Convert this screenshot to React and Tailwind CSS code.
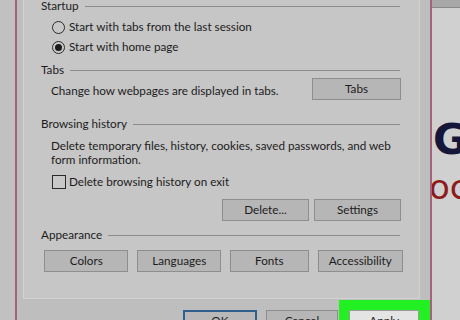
import React from 'react';

const font = { fontFamily: 'Lato, "Liberation Sans", Arial, sans-serif' };

function Header({ children }) {
    return (
        <div className="flex items-center h-[14px] pl-[17px] pr-[19px]">
            <span className="text-[11.7px] leading-none text-[#1c1c1c]">{children}</span>
            <div className="flex-1 h-px bg-[#8c8c8c] ml-[6px]"></div>
        </div>
    );
}

function Btn({ children, className = '' }) {
    return (
        <div className={`h-[22px] flex items-center justify-center bg-[#b6b6b6] border border-[#8e8e8e] text-[11.7px] text-[#1c1c1c] ${className}`}>
            {children}
        </div>
    );
}

export default function App() {
    return (
        <div className="w-[460px] h-[320px] overflow-hidden flex bg-[#c0c0c0] text-[11.7px]" style={font}>
            {/* left strip */}
            <div className="w-[15px] shrink-0 bg-[#c1c1c1]"></div>
            <div className="w-[2px] shrink-0 bg-[#a3637f]"></div>

            {/* dialog */}
            <div className="w-[413px] shrink-0 bg-[#bebebe] flex flex-col">
                <div className="shrink-0 ml-[6px] mr-[10px] h-[299px] bg-[#c6c6c6] border-l border-r border-b border-[#d2d2d2] flex flex-col">
                    <div className="mt-[-1px]">
                        <Header>Startup</Header>
                    </div>
                    <div className="pl-[28px] flex flex-col">
                        <div className="h-[20px] flex items-center gap-[4px] mt-[4px]">
                            <div className="w-[13px] h-[13px] rounded-full border border-[#2a2a2a] bg-[#c8c8c8]"></div>
                            <span className="text-[#1c1c1c]">Start with tabs from the last session</span>
                        </div>
                        <div className="h-[20px] flex items-center gap-[4px]">
                            <div className="w-[13px] h-[13px] rounded-full border border-[#2a2a2a] bg-[#c8c8c8] flex items-center justify-center">
                                <div className="w-[7px] h-[7px] rounded-full bg-[#1a1a1a]"></div>
                            </div>
                            <span className="text-[#1c1c1c]">Start with home page</span>
                        </div>
                    </div>

                    <div className="mt-[6px]">
                        <Header>Tabs</Header>
                    </div>
                    <div className="flex items-center pl-[27px] pr-[18px] h-[21px] mt-[1px]">
                        <span className="flex-1 text-[#1c1c1c] pt-[4px]">Change how webpages are displayed in tabs.</span>
                        <Btn className="w-[89px] h-[21px]">Tabs</Btn>
                    </div>

                    <div className="mt-[18px]">
                        <Header>Browsing history</Header>
                    </div>
                    <div className="pl-[27px] pr-[14px] mt-[7px] leading-[14px] text-[#1c1c1c] whitespace-nowrap">
                        Delete temporary files, history, cookies, saved passwords, and web<br />
                        form information.
                    </div>
                    <div className="pl-[28px] mt-[9px] h-[14px] flex items-center gap-[3px]">
                        <div className="w-[14px] h-[14px] border border-[#2a2a2a] bg-[#c8c8c8]"></div>
                        <span className="text-[#1c1c1c]">Delete browsing history on exit</span>
                    </div>
                    <div className="flex justify-end gap-[5px] pr-[18px] mt-[10px]">
                        <Btn className="w-[87px]">Delete...</Btn>
                        <Btn className="w-[87px]">Settings</Btn>
                    </div>

                    <div className="mt-[7px]">
                        <Header>Appearance</Header>
                    </div>
                    <div className="flex gap-[9px] pl-[20px] pr-[16px] mt-[8px]">
                        <Btn className="w-[85px]">Colors</Btn>
                        <Btn className="w-[84px]">Languages</Btn>
                        <Btn className="w-[79px]">Fonts</Btn>
                        <Btn className="w-[86px]">Accessibility</Btn>
                    </div>
                </div>

                {/* dialog buttons */}
                <div className="shrink-0 flex items-start mt-[1px] pl-[166px]">
                    <div className="mt-[10px] w-[75px] h-[22px] flex items-center justify-center bg-[#b8b8b8] border-2 border-[#2f5f8f] text-[#1c1c1c]">OK</div>
                    <div className="ml-[9px] mt-[10px] w-[74px] h-[22px] flex items-center justify-center bg-[#b6b6b6] border border-[#8e8e8e] text-[#1c1c1c]">Cancel</div>
                    <div className="ml-[1px] w-[92px] h-[30px] bg-[#22f022] pt-[10px] pl-[10px] pr-[11px] relative z-10">
                        <div className="h-[22px] flex items-center justify-center bg-[#e4e4e4] border border-[#9a9a9a] text-[#1c1c1c]">Apply</div>
                    </div>
                </div>
            </div>

            <div className="w-[2px] shrink-0 bg-[#a3637f]"></div>

            {/* background page */}
            <div className="flex-1 bg-[#d0d0d0] flex flex-col overflow-hidden">
                <div className="h-[8px] shrink-0 bg-[#a8a8a8] border-b border-[#8a8a8a]"></div>
                <div className="mt-[107px] ml-[1px] text-[42px] leading-[50px] font-bold text-[#15163a] whitespace-nowrap" style={{ fontFamily: '"DejaVu Sans", Verdana, sans-serif' }}>G</div>
                <div className="mt-[2px] ml-[-3px] text-[34px] leading-[40px] text-[#8e1a1a] whitespace-nowrap" style={{ fontFamily: '"DejaVu Sans", Verdana, sans-serif' }}>ocu</div>
            </div>
        </div>
    );
}
